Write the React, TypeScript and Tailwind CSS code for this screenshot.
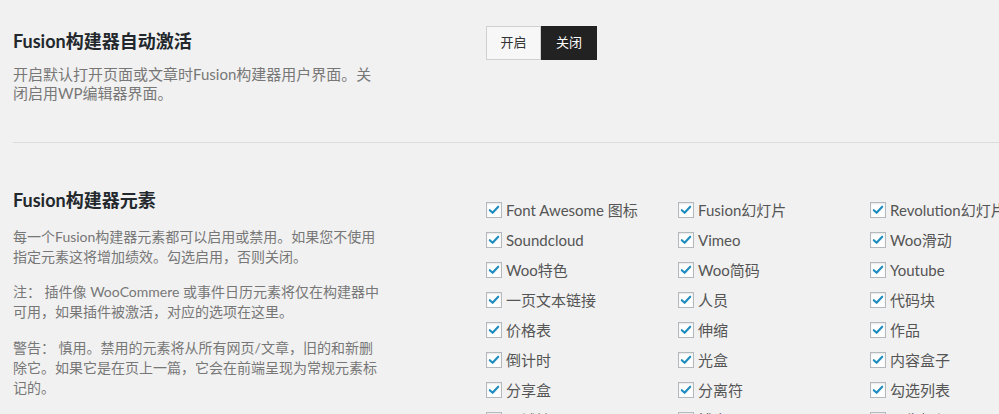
const font = 'Lato, "Noto Sans CJK SC", sans-serif';

const elements = [
  "Font Awesome 图标",
  "Fusion幻灯片",
  "Revolution幻灯片",
  "Soundcloud",
  "Vimeo",
  "Woo滑动",
  "Woo特色",
  "Woo简码",
  "Youtube",
  "一页文本链接",
  "人员",
  "代码块",
  "价格表",
  "伸缩",
  "作品",
  "倒计时",
  "光盒",
  "内容盒子",
  "分享盒",
  "分离符",
  "勾选列表",
  "区域地图",
  "博客",
  "图像框架",
];

function Checkbox() {
  return (
    <span className="flex h-4 w-4 shrink-0 items-center justify-center border border-[#b4b9be] bg-white shadow-[inset_0_1px_2px_rgba(0,0,0,0.1)]">
      <svg viewBox="0 0 16 16" className="h-[14px] w-[14px]">
        <path d="M3.2 8.2 L6.4 11.2 L12.8 4.2" fill="none" stroke="#1e8cbe" strokeWidth="2.4" strokeLinecap="round" strokeLinejoin="round" />
      </svg>
    </span>
  );
}

export default function App() {
  return (
    <div className="h-[414px] w-[999px] overflow-hidden bg-[#f1f1f1] pl-[13px]" style={{ fontFamily: font }}>
      {/* 自动激活 */}
      <div className="flex h-[143px] border-b border-[#dcdcdc] pt-[26px]">
        <div className="w-[473px] shrink-0">
          <h3 className="mt-[3px] text-[18px] font-bold leading-[24px] text-[#23282d]">Fusion构建器自动激活</h3>
          <p className="mt-[12px] w-[368px] text-[15px] leading-[19px] text-[#777]">
            开启默认打开页面或文章时Fusion构建器用户界面。关闭启用WP编辑器界面。
          </p>
        </div>
        <div className="flex h-[34px]">
          <button className="w-[55px] border border-[#d0d0d0] bg-[#f7f7f7] text-[13px] text-[#333]">开启</button>
          <button className="w-[56px] bg-[#222] text-[13px] text-white">关闭</button>
        </div>
      </div>

      {/* 元素 */}
      <div className="flex pt-[45px]">
        <div className="w-[473px] shrink-0">
          <h3 className="text-[18px] font-bold leading-[24px] text-[#23282d]">Fusion构建器元素</h3>
          <div className="mt-[15px] w-[368px] text-[14px] leading-[20px] text-[#777]">
            <p className="mb-[15px]">每一个Fusion构建器元素都可以启用或禁用。如果您不使用指定元素这将增加绩效。勾选启用，否则关闭。</p>
            <p className="mb-[16px]">注： 插件像 WooCommere 或事件日历元素将仅在构建器中可用，如果插件被激活，对应的选项在这里。</p>
            <p>警告： 慎用。禁用的元素将从所有网页/文章，旧的和新删除它。如果它是在页上一篇，它会在前端呈现为常规元素标记的。</p>
          </div>
        </div>
        <div className="grid grid-cols-[192px_192px_192px] pt-[7px]">
          {elements.map((name) => (
            <label key={name} className="flex h-[30px] items-center gap-[4px] whitespace-nowrap text-[15px] text-[#555]">
              <Checkbox />
              <span>{name}</span>
            </label>
          ))}
        </div>
      </div>
    </div>
  );
}
